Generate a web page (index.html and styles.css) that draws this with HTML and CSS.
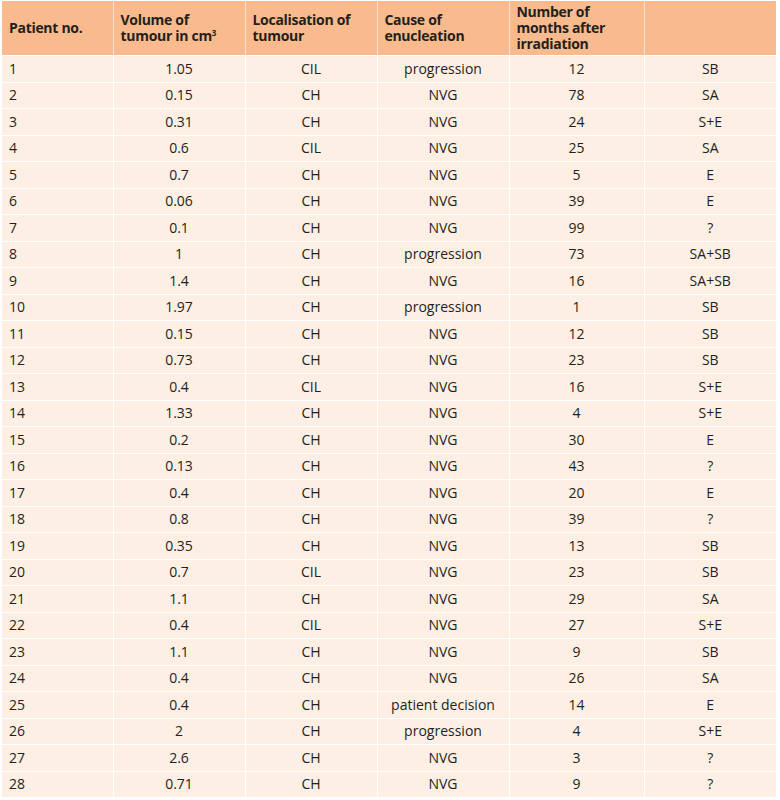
FILE: index.html
```html
<!DOCTYPE html>
<html>
<head>
<meta charset="utf-8">
<link rel="stylesheet" href="styles.css">
</head>
<body>
<table class="data">
<colgroup>
<col class="c1"><col class="c2"><col class="c3"><col class="c4"><col class="c5"><col class="c6">
</colgroup>
<thead>
<tr>
<th>Patient no.</th>
<th>Volume of<br>tumour in cm<sup>3</sup></th>
<th>Localisation of<br>tumour</th>
<th>Cause of<br>enucleation</th>
<th>Number of<br>months after<br>irradiation</th>
<th></th>
</tr>
</thead>
<tbody>
<tr><td>1</td><td>1.05</td><td>CIL</td><td>progression</td><td>12</td><td>SB</td></tr>
<tr><td>2</td><td>0.15</td><td>CH</td><td>NVG</td><td>78</td><td>SA</td></tr>
<tr><td>3</td><td>0.31</td><td>CH</td><td>NVG</td><td>24</td><td>S+E</td></tr>
<tr><td>4</td><td>0.6</td><td>CIL</td><td>NVG</td><td>25</td><td>SA</td></tr>
<tr><td>5</td><td>0.7</td><td>CH</td><td>NVG</td><td>5</td><td>E</td></tr>
<tr><td>6</td><td>0.06</td><td>CH</td><td>NVG</td><td>39</td><td>E</td></tr>
<tr><td>7</td><td>0.1</td><td>CH</td><td>NVG</td><td>99</td><td>?</td></tr>
<tr><td>8</td><td>1</td><td>CH</td><td>progression</td><td>73</td><td>SA+SB</td></tr>
<tr><td>9</td><td>1.4</td><td>CH</td><td>NVG</td><td>16</td><td>SA+SB</td></tr>
<tr><td>10</td><td>1.97</td><td>CH</td><td>progression</td><td>1</td><td>SB</td></tr>
<tr><td>11</td><td>0.15</td><td>CH</td><td>NVG</td><td>12</td><td>SB</td></tr>
<tr><td>12</td><td>0.73</td><td>CH</td><td>NVG</td><td>23</td><td>SB</td></tr>
<tr><td>13</td><td>0.4</td><td>CIL</td><td>NVG</td><td>16</td><td>S+E</td></tr>
<tr><td>14</td><td>1.33</td><td>CH</td><td>NVG</td><td>4</td><td>S+E</td></tr>
<tr><td>15</td><td>0.2</td><td>CH</td><td>NVG</td><td>30</td><td>E</td></tr>
<tr><td>16</td><td>0.13</td><td>CH</td><td>NVG</td><td>43</td><td>?</td></tr>
<tr><td>17</td><td>0.4</td><td>CH</td><td>NVG</td><td>20</td><td>E</td></tr>
<tr><td>18</td><td>0.8</td><td>CH</td><td>NVG</td><td>39</td><td>?</td></tr>
<tr><td>19</td><td>0.35</td><td>CH</td><td>NVG</td><td>13</td><td>SB</td></tr>
<tr><td>20</td><td>0.7</td><td>CIL</td><td>NVG</td><td>23</td><td>SB</td></tr>
<tr><td>21</td><td>1.1</td><td>CH</td><td>NVG</td><td>29</td><td>SA</td></tr>
<tr><td>22</td><td>0.4</td><td>CIL</td><td>NVG</td><td>27</td><td>S+E</td></tr>
<tr><td>23</td><td>1.1</td><td>CH</td><td>NVG</td><td>9</td><td>SB</td></tr>
<tr><td>24</td><td>0.4</td><td>CH</td><td>NVG</td><td>26</td><td>SA</td></tr>
<tr><td>25</td><td>0.4</td><td>CH</td><td>patient decision</td><td>14</td><td>E</td></tr>
<tr><td>26</td><td>2</td><td>CH</td><td>progression</td><td>4</td><td>S+E</td></tr>
<tr><td>27</td><td>2.6</td><td>CH</td><td>NVG</td><td>3</td><td>?</td></tr>
<tr><td>28</td><td>0.71</td><td>CH</td><td>NVG</td><td>9</td><td>?</td></tr>
</tbody>
</table>
</body>
</html>
```

FILE: styles.css
```css
html, body {
  margin: 0;
  padding: 0;
  background: #ffffff;
}

body {
  padding: 1px 0 0 2px;
  font-family: "Open Sans", "Noto Sans", sans-serif;
  color: #231f20;
}

.data {
  width: 774px;
  table-layout: fixed;
  border-collapse: collapse;
  border-spacing: 0;
  font-size: 14px;
}

.c1 { width: 111px; }
.c2 { width: 132px; }
.c3 { width: 132px; }
.c4 { width: 132px; }
.c5 { width: 135px; }
.c6 { width: 132px; }

.data th {
  background: #f9bb8d;
  height: 54px;
  padding: 0 4px 0 7px;
  text-align: left;
  vertical-align: middle;
  font-weight: 700;
  font-size: 14px;
  line-height: 16px;
  letter-spacing: -0.3px;
  border-right: 1px solid #fde3cf;
  border-bottom: 1px solid #ffffff;
}

.data th:last-child {
  border-right: none;
}

.data th sup {
  font-size: 8px;
  line-height: 0;
  vertical-align: 5px;
}

.data td {
  background: #fdefe4;
  height: 25.5px;
  padding: 0 4px;
  text-align: center;
  vertical-align: middle;
  line-height: 16px;
  border-right: 1px solid #ffffff;
  border-bottom: 1px solid #ffffff;
}

.data td:first-child {
  text-align: left;
  padding-left: 7px;
}

.data td:last-child {
  border-right: none;
}
```
